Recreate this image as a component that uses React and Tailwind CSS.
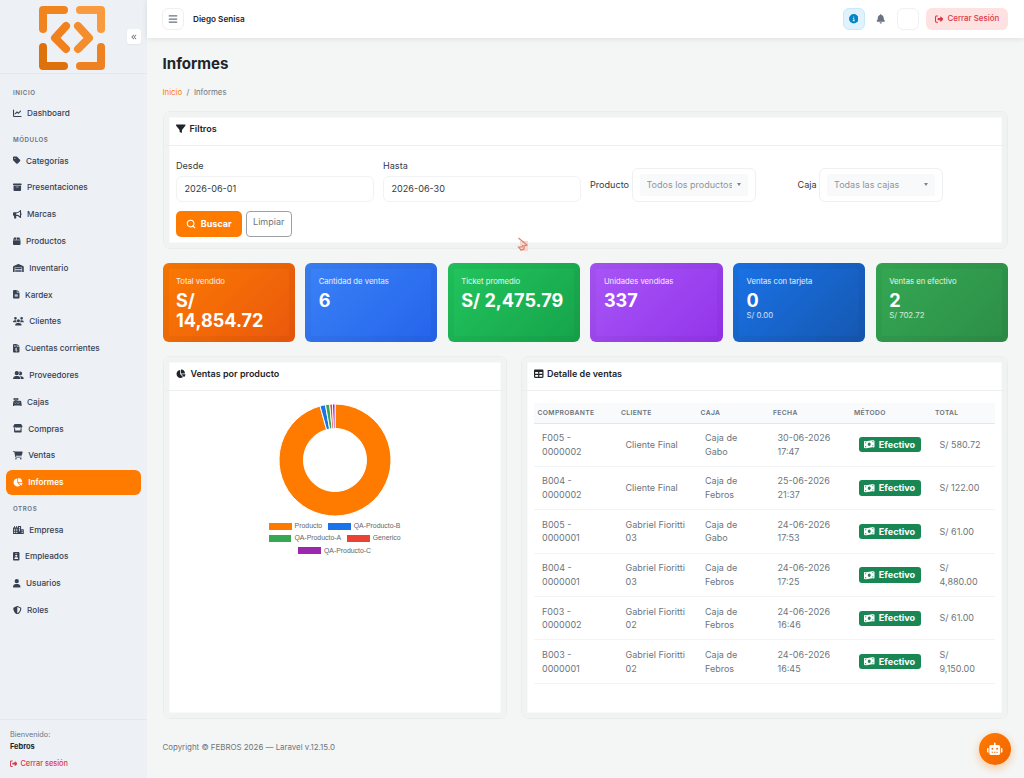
import {
  FaAnglesLeft, FaBars, FaBell, FaBox, FaBoxArchive, FaBullhorn, FaCartShopping, FaCashRegister, FaChartLine,
  FaChartPie, FaCircleInfo, FaFileInvoiceDollar, FaFileLines, FaFilter, FaIdBadge, FaMoneyBillWave,
  FaRightFromBracket, FaRobot, FaShieldHalved, FaStore, FaTable, FaTag, FaUser, FaUserGroup, FaUsers, FaWarehouse,
} from 'react-icons/fa6'
import { FaCity } from 'react-icons/fa'
import { Search } from 'lucide-react'

// glyph widths follow each icon's own aspect ratio
const W384 = 'h-[8.6px] w-[6.5px]'
const W448 = 'h-[8.6px] w-[7.5px]'
const W512 = 'h-[8.6px] w-[8.6px]'
const W576 = 'h-[8.6px] w-[9.7px]'
const W640 = 'h-[8.6px] w-[10.8px]'

const MENU = [
  { title: 'Inicio', items: [{ icon: FaChartLine, size: W512, label: 'Dashboard' }] },
  {
    title: 'Módulos',
    items: [
      { icon: FaTag, size: W448, label: 'Categorías' },
      { icon: FaBoxArchive, size: W512, label: 'Presentaciones' },
      { icon: FaBullhorn, size: W512, label: 'Marcas' },
      { icon: FaBox, size: W448, label: 'Productos' },
      { icon: FaWarehouse, size: W640, label: 'Inventario' },
      { icon: FaFileLines, size: W384, label: 'Kardex' },
      { icon: FaUsers, size: W640, label: 'Clientes' },
      { icon: FaFileInvoiceDollar, size: W384, label: 'Cuentas corrientes' },
      { icon: FaUserGroup, size: W640, label: 'Proveedores' },
      { icon: FaCashRegister, size: W512, label: 'Cajas' },
      { icon: FaStore, size: W576, label: 'Compras' },
      { icon: FaCartShopping, size: W576, label: 'Ventas' },
      { icon: FaChartPie, size: W576, label: 'Informes', active: true },
    ],
  },
  {
    title: 'Otros',
    items: [
      { icon: FaCity, size: W640, label: 'Empresa' },
      { icon: FaIdBadge, size: W384, label: 'Empleados' },
      { icon: FaUser, size: W448, label: 'Usuarios' },
      { icon: FaShieldHalved, size: W512, label: 'Roles' },
    ],
  },
]

const STATS = [
  { label: 'Total vendido', value: 'S/ 14,854.72', bg: 'from-[#fb7902] to-[#ea580c]' },
  { label: 'Cantidad de ventas', value: '6', bg: 'from-[#3b82f6] to-[#2563eb]' },
  { label: 'Ticket promedio', value: 'S/ 2,475.79', bg: 'from-[#22c55e] to-[#16a34a]' },
  { label: 'Unidades vendidas', value: '337', bg: 'from-[#a855f7] to-[#9333ea]' },
  { label: 'Ventas con tarjeta', value: '0', sub: 'S/ 0.00', bg: 'from-[#1a73e8] to-[#1557b0]' },
  { label: 'Ventas en efectivo', value: '2', sub: 'S/ 702.72', bg: 'from-[#34a853] to-[#2d8e47]' },
]

const SALES = [
  ['F005 - 0000002', 'Cliente Final', 'Caja de Gabo', '30-06-2026 17:47', 'S/ 580.72'],
  ['B004 - 0000002', 'Cliente Final', 'Caja de Febros', '25-06-2026 21:37', 'S/ 122.00'],
  ['B005 - 0000001', 'Gabriel Fioritti 03', 'Caja de Gabo', '24-06-2026 17:53', 'S/ 61.00'],
  ['B004 - 0000001', 'Gabriel Fioritti 03', 'Caja de Febros', '24-06-2026 17:25', 'S/ 4,880.00'],
  ['F003 - 0000002', 'Gabriel Fioritti 02', 'Caja de Febros', '24-06-2026 16:46', 'S/ 61.00'],
  ['B003 - 0000001', 'Gabriel Fioritti 02', 'Caja de Febros', '24-06-2026 16:45', 'S/ 9,150.00'],
]

// start and end angles in degrees, clockwise from the top
const SLICES = [
  { color: '#ff7b00', from: 0, to: 344.5 },
  { color: '#1a73e8', from: 344.5, to: 350.2 },
  { color: '#34a853', from: 350.2, to: 354.6 },
  { color: '#ea4335', from: 354.6, to: 357.4 },
  { color: '#9c27b0', from: 357.4, to: 360 },
]

const LEGEND = [
  [{ color: 'bg-[#ff7b00]', name: 'Producto' }, { color: 'bg-[#1a73e8]', name: 'QA-Producto-B' }],
  [{ color: 'bg-[#34a853]', name: 'QA-Producto-A' }, { color: 'bg-[#ea4335]', name: 'Generico' }],
  [{ color: 'bg-[#9c27b0]', name: 'QA-Producto-C' }],
]

function slicePath({ from, to }) {
  const point = (r, deg) => {
    const a = ((deg - 90) * Math.PI) / 180
    return `${57 + r * Math.cos(a)} ${57 + r * Math.sin(a)}`
  }
  const large = to - from > 180 ? 1 : 0
  return `M${point(56, from)}A56 56 0 ${large} 1 ${point(56, to)}L${point(31.5, to)}A31.5 31.5 0 ${large} 0 ${point(31.5, from)}Z`
}

function Logo() {
  return (
    <svg viewBox="0 0 68 66" className="h-[66px] w-[68px]" fill="none" strokeWidth="8" strokeLinecap="round" strokeLinejoin="round">
      <path d="M26 5H5V24" stroke="#f28420" />
      <path d="M42 5H63V24" stroke="#f99a3e" />
      <path d="M5 42V61H26" stroke="#dd720d" />
      <path d="M42 61H63V42" stroke="#ee8220" />
      <path d="M28 21L17 33L28 44" stroke="#f0811d" />
      <path d="M40 21L51 33L40 44" stroke="#f58d2d" />
    </svg>
  )
}

function Sidebar() {
  return (
    <aside className="flex h-[778px] w-[147px] shrink-0 flex-col bg-[#edf0f5]">
      <div className="relative flex h-[74px] shrink-0 justify-center border-b border-[#e4e8ee] pr-[3px] pt-[4.5px]">
        <Logo />
        <button className="absolute left-[126.5px] top-[29px] flex h-[15px] w-[14px] items-center justify-center rounded-[3px] bg-white text-[#6b7280] shadow-xs">
          <FaAnglesLeft size={6} />
        </button>
      </div>
      <nav className="flex-1 pl-[5.5px] pr-[6.5px] pt-[6.2px]">
        {MENU.map((group) => (
          <div key={group.title}>
            <p className="h-[20.7px] pl-[7.5px] pt-[7.5px] text-[6.2px] font-semibold uppercase leading-[10px] tracking-[0.55px] text-[#6b7280]">
              {group.title}
            </p>
            {group.items.map((item) => (
              <a
                key={item.label}
                className={
                  item.active
                    ? 'mb-[2px] flex h-[24.8px] items-center gap-[5.5px] rounded-[6px] bg-[#ff7b00] pl-[7.5px] text-[8.2px] font-semibold text-white'
                    : 'mb-[2px] flex h-[24.8px] items-center gap-[5.5px] pl-[7.5px] text-[8.2px] font-medium text-[#374151]'
                }
              >
                <item.icon className={item.active ? W576 : item.size} />
                {item.label}
              </a>
            ))}
          </div>
        ))}
      </nav>
      <div className="h-[59px] border-t border-[#e4e8ee] pl-[10px] pt-[9px]">
        <p className="text-[7.3px] leading-[12px] text-[#6c757d]">Bienvenido:</p>
        <p className="text-[7.4px] font-bold leading-[12px] text-[#212529]">Febros</p>
        <a className="mt-[5px] flex items-center gap-[3px] text-[7.4px] font-medium leading-[11px] text-[#dc3545]">
          <FaRightFromBracket size={7.4} /> Cerrar sesión
        </a>
      </div>
    </aside>
  )
}

function Topbar() {
  return (
    <header className="flex h-[38px] items-center bg-white pl-[15px] pr-[16px] shadow-[0_1px_6px_rgba(0,0,0,0.09)]">
      <button className="flex h-[22px] w-[22px] items-center justify-center rounded-[6px] border border-[#eff0f2] text-[#6b7280]">
        <FaBars size={10} />
      </button>
      <span className="ml-[9px] text-[8.2px] font-semibold text-[#212529]">Diego Senisa</span>
      <div className="ml-auto flex items-center">
        <button className="flex h-[22px] w-[22px] items-center justify-center rounded-[6px] border border-[#c9e8f8] bg-[#e0f2fe] text-[#0284c7]">
          <FaCircleInfo size={9.5} />
        </button>
        <FaBell size={9.5} className="ml-[11px] text-[#6b7280]" />
        <div className="ml-[12px] h-[22px] w-[22px] rounded-[6px] border border-[#f0f1f3]" />
        <button className="ml-[7px] flex h-[22px] w-[82px] items-center justify-center gap-[4.5px] rounded-[6px] bg-[#fee2e2] text-[7.9px] font-medium text-[#dc3545]">
          <FaRightFromBracket size={8.3} /> Cerrar Sesión
        </button>
      </div>
    </header>
  )
}

function Card({ icon: Icon, title, className, headClass, children }) {
  return (
    <section className={`flex flex-col rounded-[7px] border border-[#ebeced] bg-white shadow-[inset_0_0_0_5.5px_#f1f3f3] ${className}`}>
      <h2 className={`flex shrink-0 items-center border-b border-[#edeeef] pl-[12.5px] text-[9px] font-semibold text-[#212529] ${headClass}`}>
        <Icon size={9.5} /> {title}
      </h2>
      {children}
    </section>
  )
}

function SelectBox({ children }) {
  return (
    <div className="ml-[2.5px] h-[34px] w-[124px] rounded-[6px] border border-[#eef0f2] px-[7px] py-[5px]">
      <div className="flex h-[22px] items-center justify-between rounded-[2px] bg-[#f8f9fa] pl-[7px] pr-[7px] text-[9px] text-[#8e959c]">
        <span className="w-[85px] overflow-hidden whitespace-nowrap">{children}</span>
        <span className="border-x-[2.5px] border-t-[3px] border-x-transparent border-t-[#7d838a]" />
      </div>
    </div>
  )
}

function Filters() {
  return (
    <Card icon={FaFilter} title="Filtros" className="h-[138.5px]" headClass="h-[34.5px] gap-[4px]">
      <div className="flex pl-[12.5px] pt-[12.5px] text-[9.1px] text-[#343a40]">
        <label className="w-[198px]">
          <span className="block leading-[14px]">Desde</span>
          <span className="mt-[3px] flex h-[26px] items-center rounded-[6px] border border-[#f1f2f4] pl-[7.5px]">2026-06-01</span>
        </label>
        <label className="ml-[9px] w-[198px]">
          <span className="block leading-[14px]">Hasta</span>
          <span className="mt-[3px] flex h-[26px] items-center rounded-[6px] border border-[#f1f2f4] pl-[7.5px]">2026-06-30</span>
        </label>
        <div className="ml-[9px] flex w-[207.5px] items-center self-end">
          <span>Producto</span>
          <SelectBox>Todos los productos</SelectBox>
        </div>
        <div className="flex items-center self-end">
          <span>Caja</span>
          <SelectBox>Todas las cajas</SelectBox>
        </div>
      </div>
      <div className="flex gap-[4px] pl-[12.5px] pt-[9px]">
        <button className="flex h-[26px] w-[65.5px] items-center justify-center gap-[5px] rounded-[5px] bg-[#ff7b00] text-[9px] font-bold text-white">
          <Search size={10} strokeWidth={2.6} /> Buscar
        </button>
        <button className="flex h-[26px] w-[46.5px] justify-center rounded-[4px] border border-[#9aa1a8] pt-[3.4px] text-[9px] leading-[14px] text-[#6c757d]">
          Limpiar
        </button>
      </div>
    </Card>
  )
}

function Stat({ label, value, sub, bg }) {
  return (
    <div className={`h-[79px] rounded-[6px] bg-linear-135 pl-[13.5px] pr-[12px] pt-[13px] text-white shadow-[inset_0_0_0_6px_rgba(0,0,0,0.035)] ${bg}`}>
      <p className="text-[7.7px] leading-[12px] text-white/90">{label}</p>
      <p className="mt-[2px] text-[18.1px] font-bold leading-[20px]">{value}</p>
      {sub && <p className="text-[7.8px] leading-[11px] text-white/80">{sub}</p>}
    </div>
  )
}

function ProductChart() {
  return (
    <Card icon={FaChartPie} title="Ventas por producto" className="h-[363px] w-[344.5px]" headClass="h-[34px] gap-[5px]">
      <div className="flex flex-col items-center pt-[12px]">
        <svg viewBox="0 0 114 114" className="h-[114px] w-[114px]">
          {SLICES.map((s) => (
            <path key={s.color} d={slicePath(s)} fill={s.color} stroke="#fff" strokeWidth="1" />
          ))}
        </svg>
        <div className="mt-[3px] flex flex-col">
          {LEGEND.map((row, i) => (
            <div key={i} className="flex h-[12.4px] items-center justify-center gap-[6px]">
              {row.map((entry) => (
                <span key={entry.name} className="flex items-center gap-[3px] font-['Liberation_Sans',sans-serif] text-[6.9px] text-[#666]">
                  <span className={`h-[7px] w-[22.5px] ${entry.color}`} />
                  {entry.name}
                </span>
              ))}
            </div>
          ))}
        </div>
      </div>
    </Card>
  )
}

function SalesTable() {
  return (
    <Card icon={FaTable} title="Detalle de ventas" className="h-[363px] w-[487.5px]" headClass="h-[34px] gap-[3.5px]">
      <div className="px-[12px] pt-[12px]">
        <table className="w-full table-fixed border-collapse text-left">
          <colgroup>
            <col className="w-[83.5px]" />
            <col className="w-[79.5px]" />
            <col className="w-[72.5px]" />
            <col className="w-[81px]" />
            <col className="w-[81px]" />
            <col />
          </colgroup>
          <thead>
            <tr className="h-[20px] border-b border-[#e5e7eb] bg-[#f9fafc] text-[6.75px] uppercase tracking-[0.33px] text-[#6b7280]">
              {['Comprobante', 'Cliente', 'Caja', 'Fecha', 'Método', 'Total'].map((h) => (
                <th key={h} className="pl-[4px] font-semibold">{h}</th>
              ))}
            </tr>
          </thead>
          <tbody>
            {SALES.map(([doc, client, box, date, total]) => (
              <tr key={doc + date} className="h-[43.4px] border-b border-[#f3f4f6] text-[9px] leading-[13.6px] text-[#6c757d]">
                <td className="pl-[8.5px] pr-[20px]">{doc}</td>
                <td className="pl-[8.5px] pr-[5px]">{client}</td>
                <td className="pl-[8.5px] pr-[20px]">{box}</td>
                <td className="pl-[8.5px] pr-[10px]">{date}</td>
                <td className="pl-[8.5px]">
                  <span className="flex h-[15.5px] w-[62.5px] items-center justify-center gap-[4px] rounded-[3px] bg-[#198754] text-[9.1px] font-bold text-white">
                    <FaMoneyBillWave size={10.5} /> Efectivo
                  </span>
                </td>
                <td className="pl-[8.5px] pr-[10px]">{total}</td>
              </tr>
            ))}
          </tbody>
        </table>
      </div>
    </Card>
  )
}

export default function App() {
  return (
    <div className="relative flex h-[778px] w-[1024px] overflow-hidden bg-[#f4f6f6] font-['Inter',sans-serif]">
      <Sidebar />
      <div className="flex min-w-0 flex-1 flex-col">
        <Topbar />
        <main className="pl-[15.5px] pr-[16px]">
          <h1 className="pt-[16px] text-[15.1px] font-bold leading-[20px] text-[#212529]">Informes</h1>
          <div className="mb-[12.5px] mt-[12px] flex gap-[4.5px] text-[7.8px] leading-[12px] text-[#6c757d]">
            <span className="text-[#ff7b00]">Inicio</span>
            <span>/</span>
            <span>Informes</span>
          </div>
          <Filters />
          <div className="mt-[14px] grid grid-cols-6 gap-[10.3px]">
            {STATS.map((s) => (
              <Stat key={s.label} {...s} />
            ))}
          </div>
          <div className="mt-[14px] flex justify-between">
            <ProductChart />
            <SalesTable />
          </div>
          <footer className="pt-[22px] text-[7.9px] leading-[13px] text-[#6c757d]">Copyright © FEBROS 2026 — Laravel v.12.15.0</footer>
        </main>
      </div>

      <button className="absolute left-[979px] top-[733px] flex h-[32px] w-[32px] items-center justify-center rounded-full bg-linear-135 from-[#ff7b00] to-[#f06400] text-white shadow-[0_3px_10px_rgba(255,123,0,0.4)]">
        <FaRobot size={15.5} />
      </button>

      {/* mouse pointer */}
      <svg viewBox="0 0 12 16" className="absolute left-[517px] top-[236px] h-[16px] w-[12px]" fill="none">
        <path d="M3 5L11 5V15H3Z" fill="#f9d5cc" />
        <path d="M1.5 2L10 9L7 10V13L4 14L1.5 11L5 11L6 9" stroke="#d97f68" strokeWidth="1.1" />
      </svg>
    </div>
  )
}
